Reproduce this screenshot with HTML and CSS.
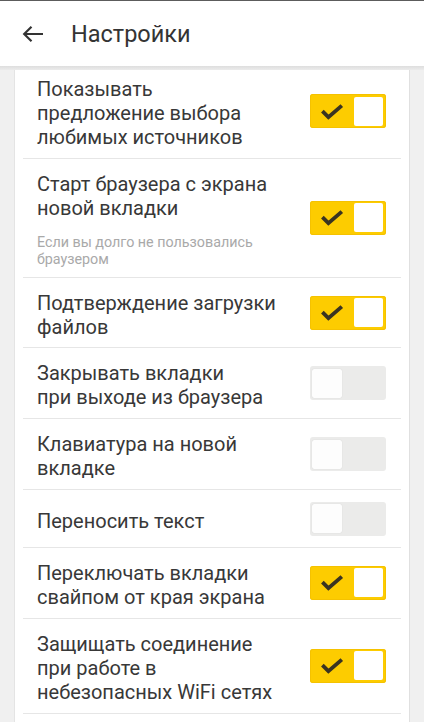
FILE: index.html
```html
<!DOCTYPE html>
<html lang="ru">
<head>
<meta charset="utf-8">
<title>Настройки</title>
<link rel="stylesheet" href="styles.css">
</head>
<body>
<div class="page">
  <header class="header">
    <svg class="back" width="22" height="18" viewBox="0 0 22 18" aria-hidden="true">
      <path d="M21 9H2.5M9.5 1.8L2.2 9l7.3 7.2" fill="none" stroke="#333" stroke-width="2.2" stroke-linecap="butt" stroke-linejoin="miter"/>
    </svg>
    <h1 class="title">Настройки</h1>
  </header>
  <div class="shade"></div>
  <main class="scroll">
    <div class="card">
      <div class="list">
        <div class="row">
          <div class="text"><div class="label">Показывать<br>предложение выбора<br>любимых источников</div></div>
          <span class="switch switch--on"><svg class="check" width="24" height="17" viewBox="0 0 24 17"><path d="M2.4 8.2l6 6L21.8 2.6" fill="none" stroke="#3a3421" stroke-width="3.8"/></svg><span class="thumb"></span></span>
        </div>
        <div class="row">
          <div class="text">
            <div class="label">Старт браузера с экрана<br>новой вкладки</div>
            <div class="sub">Если вы долго не пользовались<br>браузером</div>
          </div>
          <span class="switch switch--on"><svg class="check" width="24" height="17" viewBox="0 0 24 17"><path d="M2.4 8.2l6 6L21.8 2.6" fill="none" stroke="#3a3421" stroke-width="3.8"/></svg><span class="thumb"></span></span>
        </div>
        <div class="row">
          <div class="text"><div class="label">Подтверждение загрузки<br>файлов</div></div>
          <span class="switch switch--on"><svg class="check" width="24" height="17" viewBox="0 0 24 17"><path d="M2.4 8.2l6 6L21.8 2.6" fill="none" stroke="#3a3421" stroke-width="3.8"/></svg><span class="thumb"></span></span>
        </div>
        <div class="row">
          <div class="text"><div class="label">Закрывать вкладки<br>при выходе из браузера</div></div>
          <span class="switch switch--off"><span class="thumb"></span></span>
        </div>
        <div class="row">
          <div class="text"><div class="label">Клавиатура на новой<br>вкладке</div></div>
          <span class="switch switch--off"><span class="thumb"></span></span>
        </div>
        <div class="row">
          <div class="text"><div class="label">Переносить текст</div></div>
          <span class="switch switch--off"><span class="thumb"></span></span>
        </div>
        <div class="row">
          <div class="text"><div class="label">Переключать вкладки<br>свайпом от края экрана</div></div>
          <span class="switch switch--on"><svg class="check" width="24" height="17" viewBox="0 0 24 17"><path d="M2.4 8.2l6 6L21.8 2.6" fill="none" stroke="#3a3421" stroke-width="3.8"/></svg><span class="thumb"></span></span>
        </div>
        <div class="row">
          <div class="text"><div class="label">Защищать соединение<br>при работе в<br>небезопасных WiFi сетях</div></div>
          <span class="switch switch--on"><svg class="check" width="24" height="17" viewBox="0 0 24 17"><path d="M2.4 8.2l6 6L21.8 2.6" fill="none" stroke="#3a3421" stroke-width="3.8"/></svg><span class="thumb"></span></span>
        </div>
        <div class="row"></div>
      </div>
    </div>
  </main>
</div>
</body>
</html>
```
FILE: styles.css
```css
* { box-sizing: border-box; }
html, body { margin: 0; padding: 0; }
body {
  background: #f0f0f0;
  font-family: Roboto, "Noto Sans", sans-serif;
  color: #383838;
}
.page {
  height: 722px;
  display: flex;
  flex-direction: column;
  overflow: hidden;
  border-top: 1px solid #5c5c5c;
}
.header {
  height: 65px;
  flex: none;
  background: #fff;
  display: flex;
  align-items: center;
  padding-left: 22px;
  position: relative;
  z-index: 2;
}
.back { display: block; flex: none; }
.title {
  margin: 0 0 0 27px;
  font-size: 23.5px;
  font-weight: 400;
  color: #343434;
  line-height: 28px;
}
.shade {
  height: 4px;
  flex: none;
  background: linear-gradient(#dedede, #ececec);
  position: relative;
  z-index: 2;
}
.scroll {
  flex: 1;
  overflow: hidden;
}
.card {
  margin: 0 15px;
  background: #fff;
  box-shadow: -1px 0 0 #e4e4e4, 1px 0 0 #e0e0e0;
  height: 100%;
  overflow: hidden;
}
.list { margin-top: -6px; }
.row {
  margin: 0 8px;
  padding: 13px 15px 8.8px 14px;
  min-height: 58px;
  border-bottom: 1px solid #e6e6e6;
  display: flex;
  align-items: center;
  justify-content: space-between;
}
.text { flex: 1; min-width: 0; }
.label {
  font-size: 20px;
  line-height: 24px;
  color: #383838;
}
.sub {
  margin-top: 14px;
  font-size: 14.3px;
  line-height: 17px;
  color: #a9a9a9;
}
.switch {
  flex: none;
  width: 76px;
  height: 34px;
  margin-top: -4px;
  border-radius: 3px;
  display: flex;
  align-items: center;
  padding: 0 3px;
}
.switch--on {
  background: #fdcc00;
  justify-content: space-between;
  box-shadow: inset 0 0 0 1px #f5c200;
}
.switch--on .check { margin-left: 7px; display: block; }
.switch--on .thumb {
  width: 29px;
  height: 29px;
  background: #fff;
  border-radius: 2px;
}
.switch--off {
  background: #ebebea;
  justify-content: flex-start;
  padding: 0 2px;
}
.switch--off .thumb {
  width: 30px;
  height: 29px;
  background: #fdfdfd;
  border-radius: 2px;
  box-shadow: 0 0 1px rgba(0,0,0,0.18);
}
```
